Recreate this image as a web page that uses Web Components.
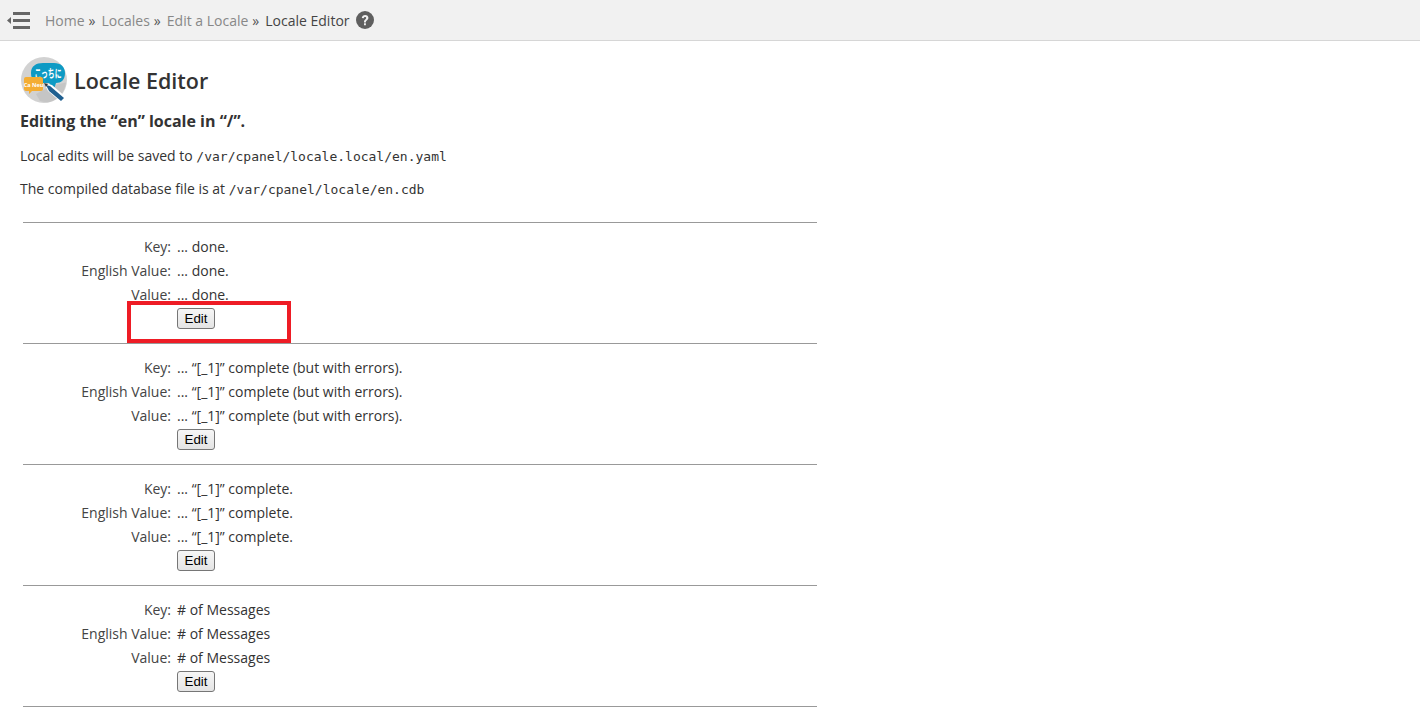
<!DOCTYPE html>
<html><head><meta charset="utf-8"><title>Locale Editor</title>
<style>
html,body{margin:0;padding:0;background:#fff;overflow:hidden;height:727px}
body{font-family:"Open Sans",sans-serif;font-size:14px;color:#333}
</style></head><body>
<app-topbar></app-topbar>
<page-title>Locale Editor</page-title>
<locale-intro></locale-intro>
<locale-list>
<locale-entry text="... done." highlight></locale-entry>
<locale-entry text="... “[_1]” complete (but with errors)."></locale-entry>
<locale-entry text="... “[_1]” complete."></locale-entry>
<locale-entry text="# of Messages"></locale-entry>
</locale-list>
<template id="t-bar"><style>
:host{display:flex;align-items:center;height:40px;background:#f1f1f1;border-bottom:1px solid #d6d6d6;font-size:14px}
svg{display:block}
.menu{margin-left:7px;width:24px;height:18px;flex:none}
nav{display:flex;align-items:center;margin-left:14px;white-space:nowrap}
a{color:#888;text-decoration:none}
.sep{color:#555;margin:0 6px 0 4px}
.cur{color:#444}
.help{margin-left:6px;width:18px;height:18px}
</style>
<svg class="menu" viewBox="0 0 24 18"><path d="M6 1h17v3H6zM6 8h17v3H6zM6 15h17v3H6z" fill="#666"/><path d="M0 9.500l4-3.500v7z" fill="#666"/></svg>
<nav><a>Home</a><span class="sep">»</span><a>Locales</a><span class="sep">»</span><a>Edit a Locale</a><span class="sep">»</span><span class="cur">Locale Editor</span>
<svg class="help" viewBox="0 0 18 18"><circle cx="9" cy="9" r="9" fill="#5f5f5f"/><path d="M5.800 7.100C6 5.100 7.400 4 9.200 4c1.900 0 3.200 1.200 3.200 2.800 0 1.400-.8 2-1.600 2.600-.6.400-.9.800-.9 1.500v.5H8v-.7c0-1.100.5-1.700 1.200-2.300.6-.4 1-.8 1-1.400 0-.6-.4-1-1.100-1-.7 0-1.200.5-1.300 1.300zM8 12.300h1.900v1.900H8z" fill="#f1f1f1"/></svg></nav>
</template>
<template id="t-title"><style>
:host{display:flex;align-items:center;margin:15px 0 0 20px;height:48px;font-size:21.500px;font-weight:600;color:#333}
svg{width:48px;height:48px;margin-right:6px;flex:none}
text{font-family:"Noto Sans CJK JP","Open Sans",sans-serif}
</style>
<svg viewBox="0 0 48 48">
<circle cx="24" cy="24" r="23" fill="#d2d2d2"/>
<path d="M27 46.500a23 23 0 0 0 19-20L30 30 16 38l4 7z" fill="#bdbdbd" opacity=".6"/>
<path d="M11 17c0-7 5-10 12-10h11c7 0 11 4 11 10 0 7-4 10-9 10l-2 6-5-6H22c-7 0-11-3-11-10z" fill="#0e9ac4"/>
<text x="28" y="22" font-size="11.500" font-weight="700" fill="#fff" text-anchor="middle" textLength="27" lengthAdjust="spacingAndGlyphs">こっちに</text>
<path d="M6 21h15a2 2 0 0 1 2 2v10a2 2 0 0 1-2 2H12l-3 3v-3H6a2 2 0 0 1-2-2V23a2 2 0 0 1 2-2z" fill="#f4ad33"/>
<text x="13.500" y="30.500" font-size="5.500" font-weight="700" fill="#fff" text-anchor="middle" style="font-family:'Open Sans',sans-serif">Ca Neu</text>
<path d="M24 27l8 2 15 13-5 5-14-12z" fill="#fff"/>
<path d="M26 29l4 1 14 12-3 3-12-10z" fill="#1f5f8f"/>
<path d="M24 27l4 1-2 3z" fill="#333"/>
</svg><slot></slot>
</template>
<template id="t-intro"><style>
:host{display:block;margin:0 0 0 20px}
h2{margin:5px 0 0;font-size:16px;font-weight:700;line-height:24px;color:#333}
p{margin:13px 0 0;line-height:19px;color:#333}
code{font-family:"DejaVu Sans Mono",monospace;font-size:13px}
</style>
<h2>Editing the “en” locale in “/”.</h2>
<p>Local edits will be saved to <code>/var/cpanel/locale.local/en.yaml</code></p>
<p>The compiled database file is at <code>/var/cpanel/locale/en.cdb</code></p>
</template>
<template id="t-list"><style>
:host{display:block;margin:23px 0 0 23px;width:794px;border-top:1px solid #999}
</style><slot></slot></template>
<template id="t-entry"><style>
:host{display:block;position:relative;height:120px;border-bottom:1px solid #999}
.grid{display:grid;grid-template-columns:148px 1fr;column-gap:6px;grid-auto-rows:24px;padding-top:11px;align-items:center}
.k{text-align:right;color:#444}
.v{color:#333}
button{font-family:"Liberation Sans",Arial,sans-serif;font-size:13.333px;color:#000;background:#efefef;border:1px solid #767676;border-radius:3px;background:linear-gradient(#f6f6f6,#e4e4e4);padding:0;width:38px;height:21px;margin:0;display:block}
.mark{position:absolute;left:104px;top:78px;width:156px;height:34px;border:4px solid #ee1c25;pointer-events:none}
</style>
<div class="grid"><div class="k">Key:</div><div class="v t"></div><div class="k">English Value:</div><div class="v t"></div><div class="k">Value:</div><div class="v t"></div><div></div><div><button>Edit</button></div></div>
</template>
<script>
function mk(name,tid,init){customElements.define(name,class extends HTMLElement{connectedCallback(){if(this.shadowRoot)return;const r=this.attachShadow({mode:'open'});r.appendChild(document.getElementById(tid).content.cloneNode(true));if(init)init(this,r);}});}
mk('app-topbar','t-bar');
mk('page-title','t-title');
mk('locale-intro','t-intro');
mk('locale-list','t-list');
mk('locale-entry','t-entry',(h,r)=>{r.querySelectorAll('.t').forEach(e=>e.textContent=h.getAttribute('text'));if(h.hasAttribute('highlight')){const d=document.createElement('div');d.className='mark';r.appendChild(d);}});
</script>
</body></html>
